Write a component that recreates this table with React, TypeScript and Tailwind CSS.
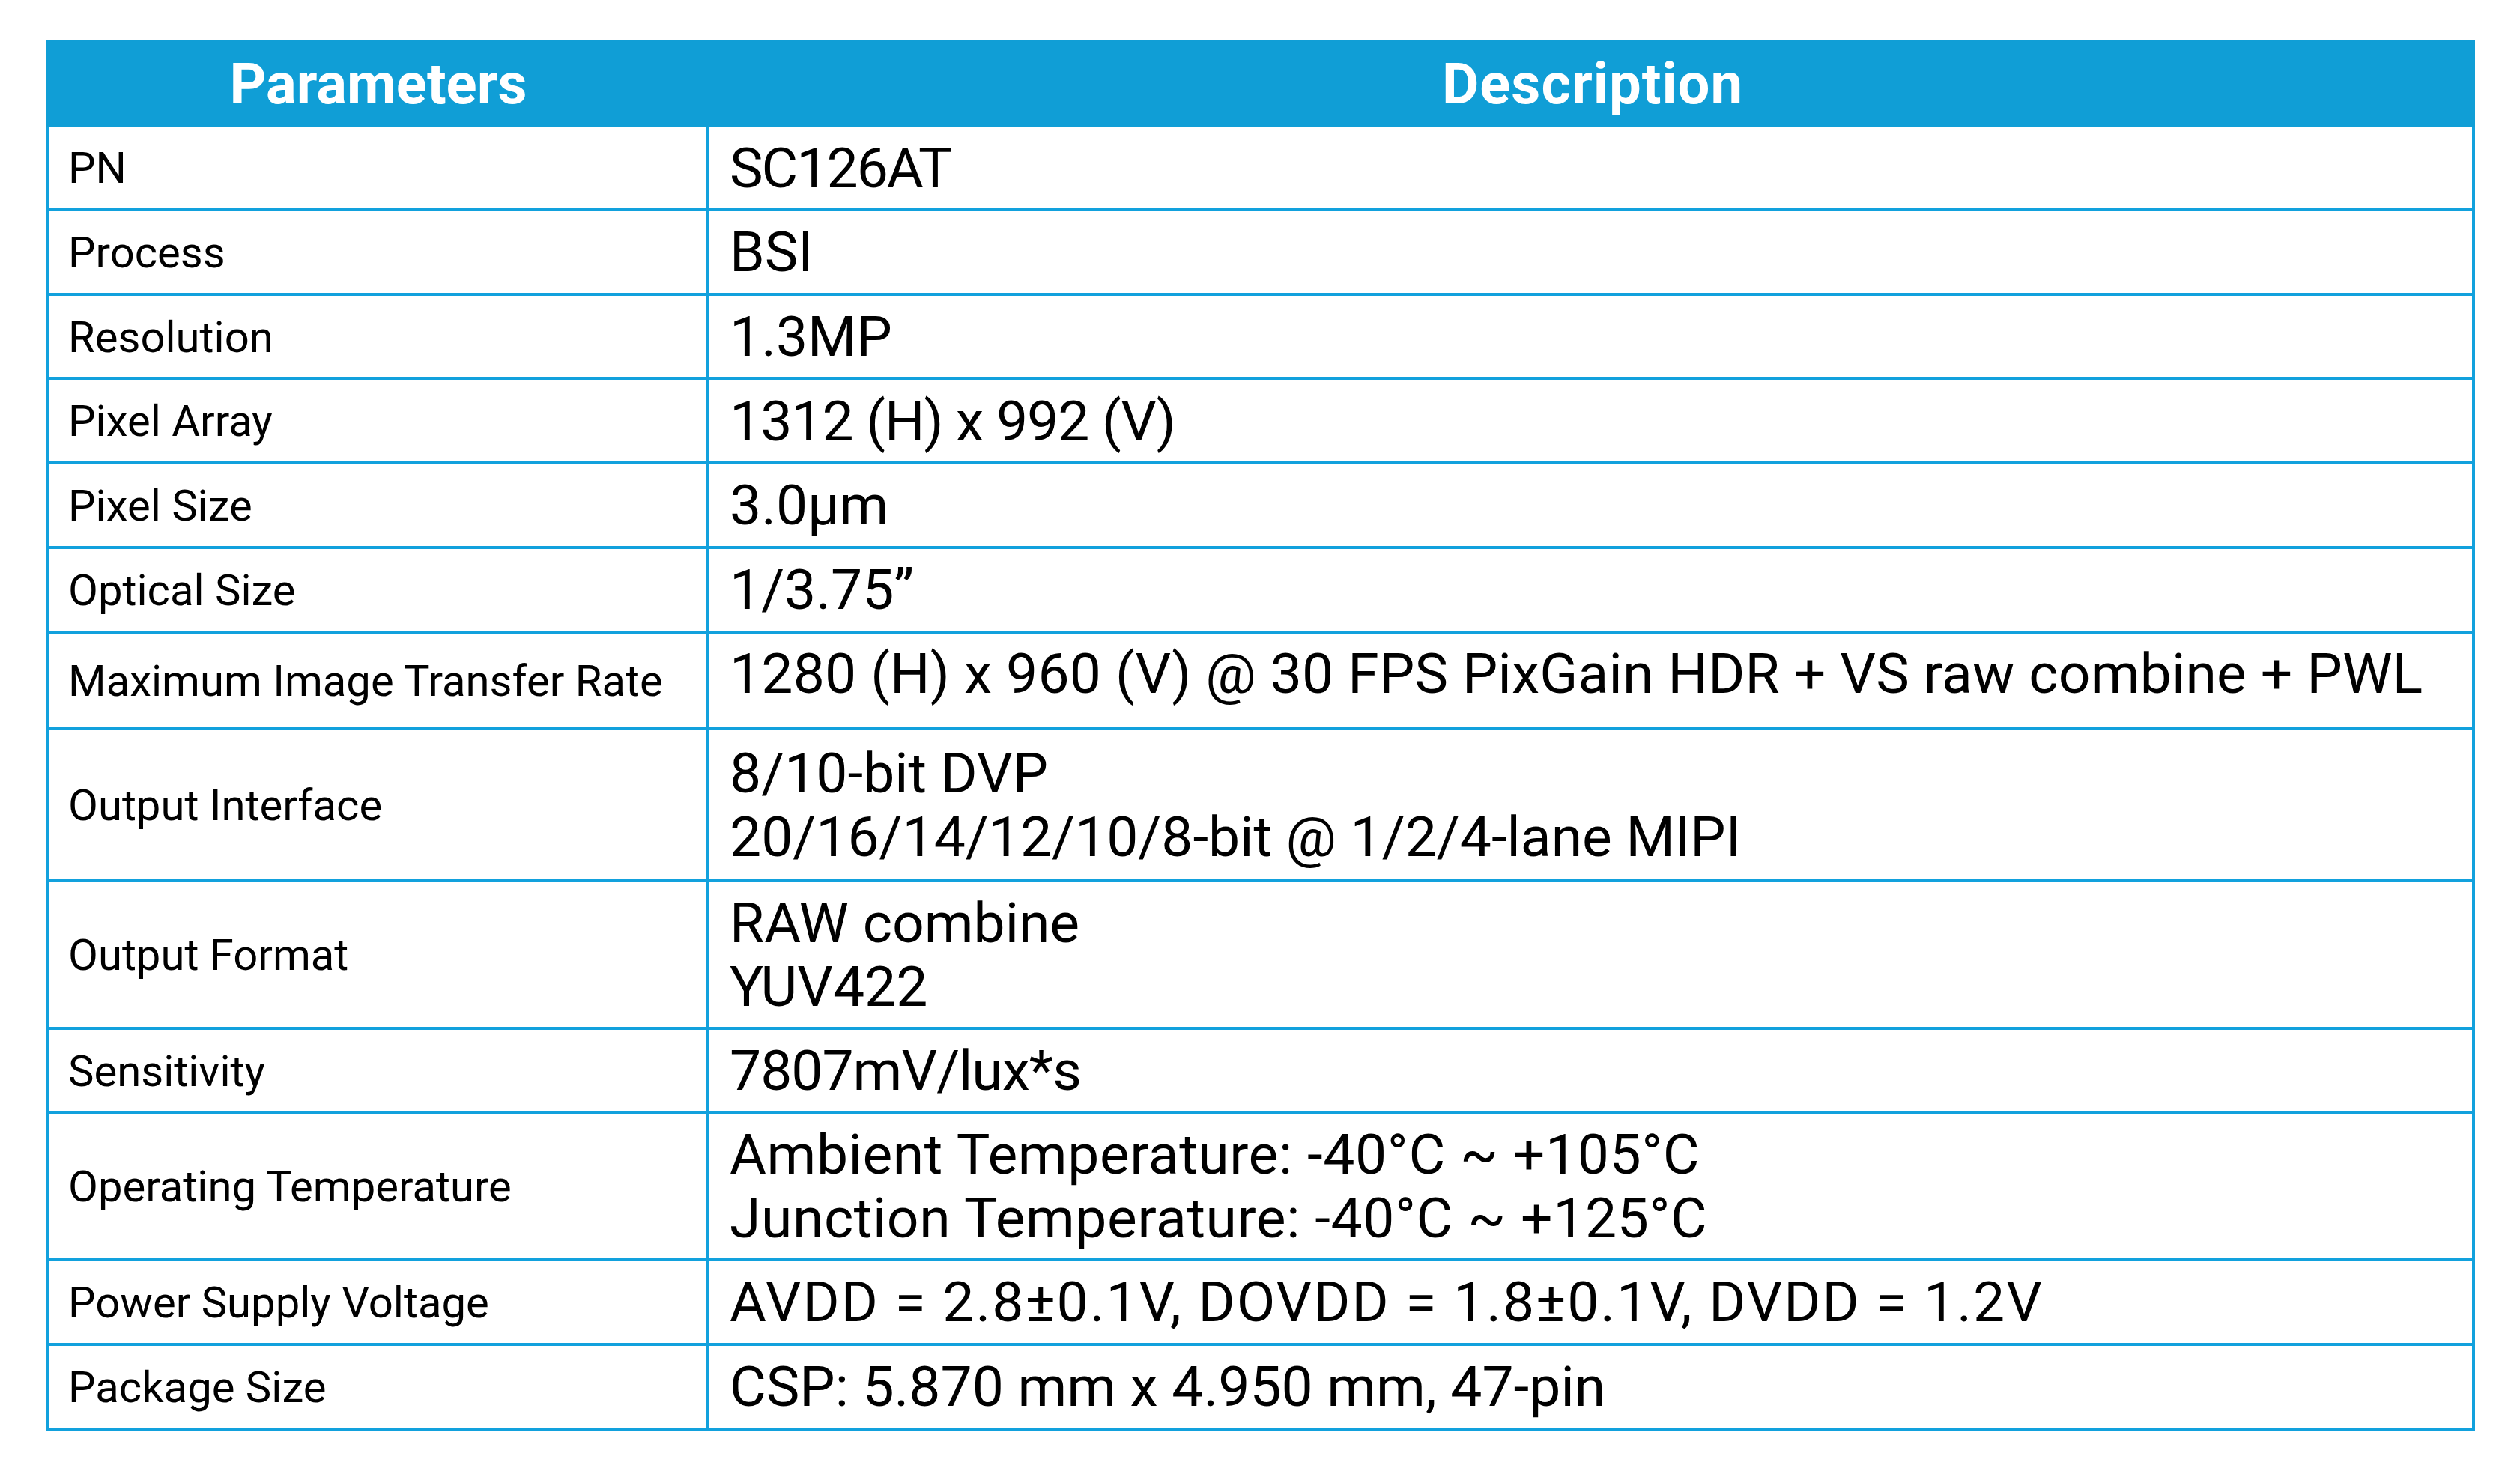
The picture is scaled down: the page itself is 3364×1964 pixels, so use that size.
type Row = {
  label: string;
  value: string[];
  h: string;
  track?: string;
  raise?: boolean;
};

const rows: Row[] = [
  { label: "PN", value: ["SC126AT"], h: "h-[112px]", track: "tracking-[-2px]" },
  { label: "Process", value: ["BSI"], h: "h-[113px]" },
  { label: "Resolution", value: ["1.3MP"], h: "h-[113px]" },
  { label: "Pixel Array", value: ["1312 (H) x 992 (V)"], h: "h-[112px]", track: "tracking-[-1px]" },
  { label: "Pixel Size", value: ["3.0μm"], h: "h-[113px]" },
  { label: "Optical Size", value: ["1/3.75”"], h: "h-[113px]" },
  {
    label: "Maximum Image Transfer Rate",
    value: ["1280 (H) x 960 (V) @ 30 FPS PixGain HDR + VS raw combine + PWL"],
    h: "h-[129px]",
    track: "tracking-[0.2px]",
    raise: true,
  },
  {
    label: "Output Interface",
    value: ["8/10-bit DVP", "20/16/14/12/10/8-bit @ 1/2/4-lane MIPI"],
    h: "h-[203px]",
  },
  { label: "Output Format", value: ["RAW combine", "YUV422"], h: "h-[197px]" },
  { label: "Sensitivity", value: ["7807mV/lux*s"], h: "h-[113px]", track: "tracking-[-1px]" },
  {
    label: "Operating Temperature",
    value: ["Ambient Temperature: -40°C ~ +105°C", "Junction Temperature: -40°C ~ +125°C"],
    h: "h-[196px]",
    track: "tracking-[0.6px]",
  },
  {
    label: "Power Supply Voltage",
    value: ["AVDD = 2.8±0.1V, DOVDD = 1.8±0.1V, DVDD = 1.2V"],
    h: "h-[113px]",
    track: "tracking-[2px]",
  },
  { label: "Package Size", value: ["CSP: 5.870 mm x 4.950 mm, 47-pin"], h: "h-[113px]" },
];

export default function App() {
  return (
    <div className="min-h-screen bg-white pt-[54px] pl-[62px] font-['Roboto','Noto_Sans',sans-serif] text-black">
      <div className="w-[3242px]">
        <div className="grid h-[116px] grid-cols-[886px_1fr] bg-[#109ed6] text-[76px] font-bold leading-none text-white">
          <div className="flex items-center justify-center">Parameters</div>
          <div className="flex items-center justify-center tracking-[1px]">Description</div>
        </div>

        <div className="border-x-4 border-[#12a1dd]">
          {rows.map((row) => (
            <div
              key={row.label}
              className={`grid grid-cols-[880px_1fr] border-b-4 border-[#12a1dd] ${row.h}`}
            >
              <div className="flex items-center border-r-4 border-[#12a1dd] pl-[25px] text-[58px] leading-none">
                {row.label}
              </div>
              <div
                className={`flex flex-col justify-center pl-[28px] text-[75px] leading-[85px] ${
                  row.track ?? ""
                } ${row.raise ? "pb-[18px]" : ""}`}
              >
                {row.value.map((line) => (
                  <div key={line}>{line}</div>
                ))}
              </div>
            </div>
          ))}
        </div>
      </div>
    </div>
  );
}
